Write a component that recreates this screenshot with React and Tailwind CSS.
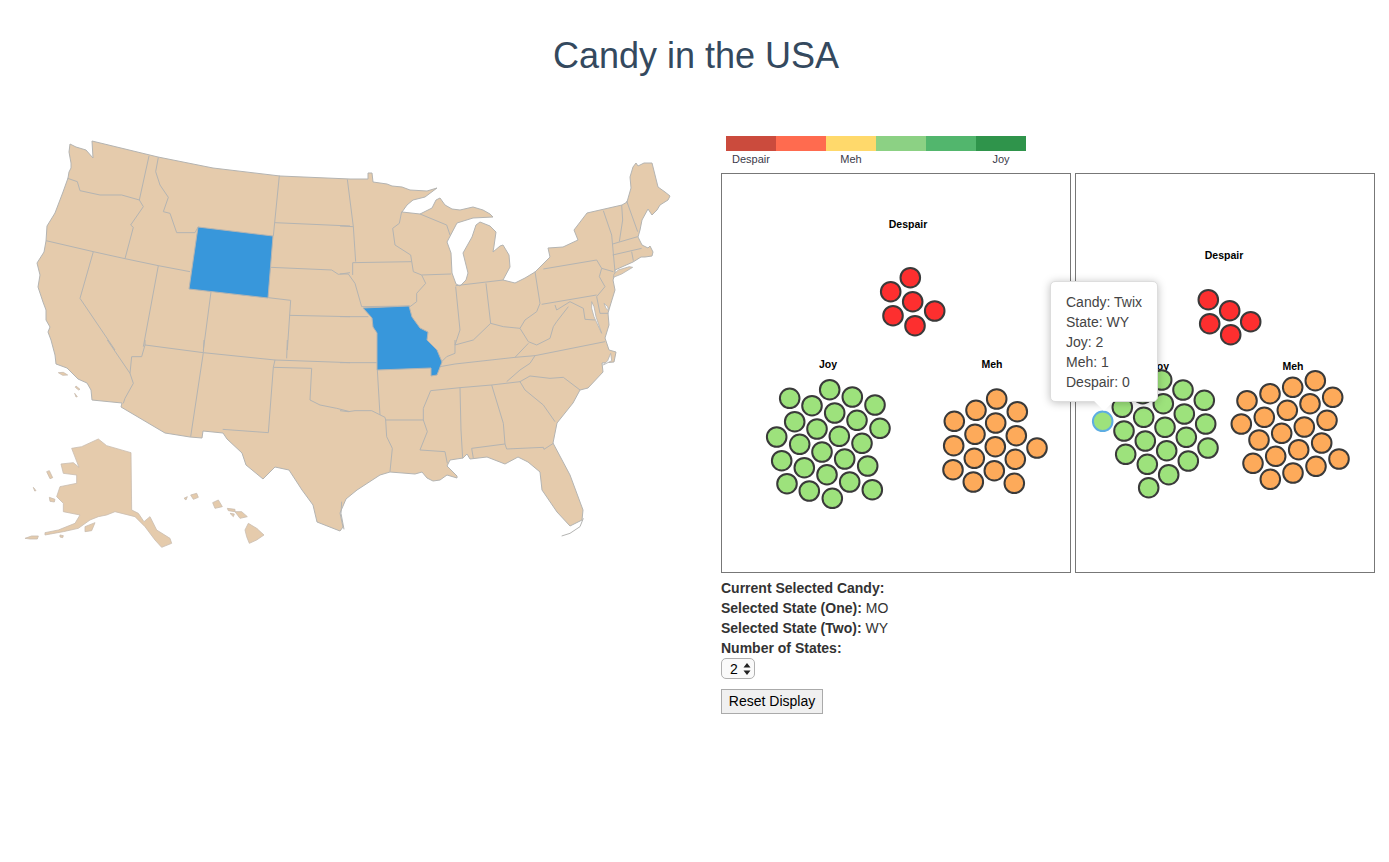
import React from "react";

const LAND = "#e5cbac";
const LINE = "#b4b4b2";

const LEGEND = ["#cb4b3d", "#ff6b4f", "#ffd96b", "#8cd184", "#52b66d", "#2f944b"];
const LEGEND_LABELS = ["Despair", "", "Meh", "", "", "Joy"];

// lower 48, clockwise from the north west corner of Washington
const MAINLAND =
  "M70 144 76 147 86 150 93 158 92 141 158 157 213 168 280 176 350 179 368 179 368 173 372 173 373 182 387 184 392 186 402 187 410 190 427 191 437 188 425 197 413 200 407 205 402 212 420 214 432 208 436 200 440 198 445 205 452 209 460 210 473 207 483 210 490 214 493 217 473 218 457 223 447 242 451 253 452 273 456 284 460 286 466 280 468 273 463 253 472 237 476 225 480 222 490 226 496 232 494 246 493 252 500 246 503 245 509 255 510 267 503 280 515 283 525 278 535 272 550 257 548 248 563 247 578 240 574 230 587 213 622 205 627 202 631 188 630 177 633 167 636 163 638 166 644 163 652 163 655 175 658 187 665 192 670 196 668 200 660 205 657 210 652 215 648 209 642 220 640 230 638 237 642 245 648 248 650 246 653 252 652 256 645 257 641 257 633 262 615 270 615 274 613 280 615 290 611 303 608 313 609 325 605 338 609 350 616 352 614 362 602 363 603 372 588 388 580 390 573 403 557 423 553 443 570 475 583 510 582 520 570 526 557 512 542 490 540 472 528 462 518 457 505 464 487 457 470 459 467 454 463 458 450 460 447 466 457 476 457 478 447 475 440 480 433 481 427 478 422 472 415 474 390 472 380 475 357 490 346 499 340 513 343 527 340 531 317 522 313 505 302 490 289 470 275 467 263 479 246 465 242 453 227 439 223 433 203 431 202 438 190 437 165 433 121 407 122 403 92 400 91 390 87 383 78 379 67 368 56 364 55 355 51 340 48 332 50 327 46 320 46 310 43 302 38 287 40 275 37 263 44 252 46 241 47 226 55 213 63 192 68 178 69 172 71 168 71 163 69 152Z";

const ZOOM1_LINES = [
  "203,175 232,185 240,212 300,225 365,225 418,240",
  "447,108 418,240 430,260 392,315 400,322 375,416",
  "138,362 280,395 375,416 475,437 570,455",
  "475,112 467,155 480,195 505,232 490,275 510,280 530,338 585,338 595,320",
  "280,395 240,535 345,690",
  "475,437 430,680",
  "633,516 610,690",
  "805,533 872,541 862,690",
  "838,167 820,348",
  "825,308 1050,318",
  "812,442 995,450 1015,463 1050,458",
  "868,586 1050,590",
];

const ZOOM2_LINES = [
  "22,178 40,320 47,425",
  "38,428 215,425",
  "0,318 40,320",
  "38,428 38,465",
  "0,462 25,462 45,490 65,560 210,558",
  "185,275 178,310 158,325 165,375 212,405 220,455 245,465 333,462",
  "245,465 257,490 230,520 230,545 210,560",
  "240,282 320,315 330,345",
  "347,500 360,630 345,675",
  "347,497 490,480",
  "438,490 452,610",
  "585,455 600,550 590,575 555,600 540,625 490,620 452,610 400,660 345,675",
  "610,447 770,420 785,445 820,455",
  "790,272 815,345 825,455",
  "785,445 778,470 795,500 770,530",
  "605,553 770,525",
  "845,255 848,300 838,365",
  "860,243 893,335",
  "818,372 893,350",
  "818,405 905,385",
  "875,395 880,422",
  "645,555 650,570 690,545 730,565 735,598 765,600",
  "770,530 780,580 805,580",
  "685,560 650,605 640,620 630,655 590,675 565,665 540,625",
  "0,590 85,590",
];

const ZOOM3_LINES = [
  "435,0 435,15 610,38 825,60 1050,68",
  "612,0 610,38 572,290",
  "825,60 820,82 805,278 668,268",
  "820,82 935,85 930,180 960,195 1010,205 1050,215",
  "322,0 390,100 400,130 375,175 370,190",
  "390,100 395,50 425,50 435,15",
  "862,0 860,55",
];

const ZOOM4_LINES = [
  "0,68 110,68",
  "112,90 120,225",
  "0,212 25,215 45,212 95,212 135,232 137,240 250,240",
  "137,240 140,290 157,325 150,395",
  "250,240 262,275 240,330 315,335 322,370",
  "272,152 250,205 250,240",
  "272,152 360,143 455,135 540,125",
  "300,80 345,72 525,52 585,47 795,5",
  "525,52 565,10",
  "305,65 320,50 345,40 345,0",
  "585,47 570,70 540,90 500,125",
  "540,125 570,108 630,115 670,112 720,150",
  "540,125 555,150 610,195 645,245",
  "360,143 363,270 368,355",
  "455,135 490,250 495,312",
  "400,355 395,325 495,312 500,327 610,322 612,328 640,310",
];

// outlying land, in zoom 3 coordinates
const OUTLYING = [
  "295,297 320,317 393,338 395,510 415,520 432,545 450,530 470,570 510,595 515,610 485,622 465,600 435,560 405,530 345,515 320,525 295,530 270,540 235,565 190,575 135,585 135,578 175,570 225,550 240,525 190,515 190,490 170,470 180,440 230,430 230,405 190,400 183,372 220,368 237,382 215,325 245,320",
  "735,570 745,550 770,565 792,585 770,600 748,610 740,590",
  "705,515 725,515 742,530 720,535",
  "682,505 705,508 705,515 685,512",
  "690,520 703,522 700,530",
  "638,488 655,480 667,500 645,505",
  "572,465 590,460 595,472 580,478",
  "552,475 562,470 558,480",
  "175,98 190,97 203,105 188,106",
  "228,138 240,148 236,150 226,142",
  "224,160 232,170 228,171",
  "140,395 148,392 158,413 150,416",
  "100,442 108,452 104,453",
  "148,472 165,478 163,486 150,484",
  "75,595 95,588 115,588 112,597 90,597",
  "255,560 285,548 275,572 255,575",
  "180,585 190,587 188,593 180,591",
];

// bays cut out of the mainland, in zoom 2 coordinates
const WATER = [
  "755,545 762,560 768,590 785,640 778,625 762,590 755,565",
  "792,550 803,560 806,573 798,565",
];

const LONG_ISLAND = "820,472 845,462 878,442 868,440 835,450 822,462";
const FLORIDA_KEYS = "665,588 690,580 720,560 730,535";
const OUTER_BANKS = "790,75 815,62 812,40 803,62";
const TEXAS_BAR = "5,485 3,520 12,568";

const WYOMING = "198 227 273 236 268 298 189 289";
const MISSOURI = "363 308 409 306 412 317 420 328 428 332 427 340 437 350 442 362 437 375 431 376 431 368 377 370 377 333 373 327 372 318";

const PANEL_ONE = {
  red: [[910.3, 277.7], [890.7, 291.7], [912.7, 301.7], [934.7, 311], [893, 315.7], [915, 325.7]],
  green: [
    [829.7, 389.7], [789.7, 398.3], [852.3, 397], [812, 405.7], [875, 405], [834.7, 413], [794.7, 421.7],
    [857, 420.3], [817, 429], [880, 428.3], [839.3, 436.3], [776.7, 437], [799.7, 444.3], [862, 443.3],
    [822, 452], [781.7, 460.7], [844.7, 459], [804.3, 467.7], [867.7, 466], [827, 474.7], [787, 483.7],
    [849.7, 482], [809.3, 491], [872.3, 489.7], [832.3, 498.3],
  ],
  orange: [
    [996.7, 399], [976, 410.3], [1017.3, 411.7], [954.3, 421.3], [995.7, 423], [975, 434.3], [1016.3, 435.7],
    [953.7, 445.7], [995.3, 446.7], [1037, 448], [974.3, 458.3], [1015.3, 459.3], [953, 469.7], [994.3, 470.7],
    [973.3, 482], [1014.3, 483.3],
  ],
};

const PANEL_TWO = {
  red: [[1208.3, 299.7], [1229.7, 310.7], [1250.7, 321.7], [1209.7, 323.7], [1230.7, 334.7]],
  green: [
    [1122.3, 407.3], [1161.7, 380], [1183, 390], [1204.3, 400.3], [1142.7, 393.7], [1163.3, 403.7], [1184.3, 414],
    [1205.7, 424], [1143.7, 417.3], [1165, 427.3], [1124, 431], [1186.3, 437.3], [1145.3, 441], [1208, 448],
    [1166.7, 450.7], [1125.7, 454.3], [1188.3, 461], [1147.3, 464.3], [1168.7, 474.7], [1148.7, 487.7],
  ],
  orange: [
    [1315.3, 380.7], [1292.7, 387.3], [1270, 393.7], [1332.7, 397.3], [1247, 400.7], [1310, 403.7], [1287.3, 410.3],
    [1264.3, 417.3], [1327, 420.3], [1241.3, 424], [1304.3, 427], [1281.7, 433.3], [1259, 440], [1321.7, 443],
    [1298.7, 449.7], [1275.7, 456.3], [1316, 466.3], [1339, 459], [1253, 463.3], [1293, 473], [1270.3, 479.3],
  ],
};

const BorderGroup = ({ x, y, lines }) => (
  <g transform={`translate(${x} ${y}) scale(0.33333)`}>
    {lines.map((pts) => (
      <polyline key={pts} points={pts} fill="none" stroke={LINE} strokeWidth="1" vectorEffect="non-scaling-stroke" />
    ))}
  </g>
);

const UsaMap = () => (
  <svg width="721" height="440" viewBox="0 130 721 440" className="shrink-0">
    <path d={MAINLAND} fill={LAND} stroke={LINE} strokeWidth="1" strokeLinejoin="round" />
    <g transform="translate(0 340) scale(0.33333)">
      {OUTLYING.map((pts) => (
        <polygon key={pts} points={pts} fill={LAND} stroke="#c9bdb0" strokeWidth="0.8" vectorEffect="non-scaling-stroke" />
      ))}
    </g>
    <BorderGroup x={0} y={120} lines={ZOOM1_LINES} />
    <BorderGroup x={340} y={120} lines={ZOOM2_LINES} />
    <BorderGroup x={0} y={340} lines={ZOOM3_LINES} />
    <BorderGroup x={340} y={340} lines={ZOOM4_LINES} />
    <g transform="translate(340 120) scale(0.33333)">
      {WATER.map((pts) => (
        <polygon key={pts} points={pts} fill="#fff" stroke={LINE} strokeWidth="0.8" vectorEffect="non-scaling-stroke" />
      ))}
      <polygon points={LONG_ISLAND} fill={LAND} stroke={LINE} strokeWidth="0.8" vectorEffect="non-scaling-stroke" />
    </g>
    <g transform="translate(340 340) scale(0.33333)">
      <polygon points={OUTER_BANKS} fill="#fff" stroke={LINE} strokeWidth="0.8" vectorEffect="non-scaling-stroke" />
      <polyline points={FLORIDA_KEYS} fill="none" stroke={LINE} strokeWidth="1" vectorEffect="non-scaling-stroke" />
      <polyline points={TEXAS_BAR} fill="none" stroke={LINE} strokeWidth="1" vectorEffect="non-scaling-stroke" />
    </g>
    <polygon points={WYOMING} fill="#3897db" stroke={LINE} strokeWidth="1" />
    <polygon points={MISSOURI} fill="#3897db" stroke={LINE} strokeWidth="1" />
  </svg>
);

const Dots = ({ items, fill }) =>
  items.map(([cx, cy]) => (
    <circle key={`${cx}-${cy}`} cx={cx} cy={cy} r="9.8" fill={fill} stroke="#3a3a3a" strokeWidth="2" />
  ));

const Label = ({ x, y, children }) => (
  <text x={x} y={y} textAnchor="middle" fontSize="10.5" fontWeight="700" fill="#000">
    {children}
  </text>
);

const App = () => {
  return (
    <div className="min-h-[862px] bg-white font-['Liberation_Sans',Arial,sans-serif] text-[14px] leading-[20px] text-[#333]">
      <h1 className="pt-[36px] pl-[3px] text-center text-[36px] leading-[40px] font-normal text-[#34495e]">
        Candy in the USA
      </h1>

      <div className="mt-[54px] flex">
        <UsaMap />

        <div className="pt-[6px]">
          {/* legend */}
          <div className="ml-[5px] flex">
            {LEGEND.map((color) => (
              <div key={color} className="h-[15px] w-[50px]" style={{ backgroundColor: color }} />
            ))}
          </div>
          <div className="ml-[5px] flex h-[22px]">
            {LEGEND_LABELS.map((label, i) => (
              <div key={i} className="w-[50px] pt-[1px] text-center text-[11px] leading-[14px] text-[#3a3a4a]">
                {label}
              </div>
            ))}
          </div>

          {/* charts */}
          <div className="relative flex gap-[4px]">
            <div className="h-[400px] w-[350px] border border-[#777]">
              <svg width="348" height="398" viewBox="722 174 348 398">
                <Label x={908} y={228}>Despair</Label>
                <Label x={828} y={368}>Joy</Label>
                <Label x={992} y={368}>Meh</Label>
                <Dots items={PANEL_ONE.red} fill="#fd2f2f" />
                <Dots items={PANEL_ONE.green} fill="#9de27c" />
                <Dots items={PANEL_ONE.orange} fill="#fdaa5a" />
              </svg>
            </div>
            <div className="h-[400px] w-[300px] border border-[#777]">
              <svg width="298" height="398" viewBox="1076 174 298 398" className="overflow-visible">
                <Label x={1224} y={259}>Despair</Label>
                <Label x={1160} y={370}>Joy</Label>
                <Label x={1293} y={370}>Meh</Label>
                <Dots items={PANEL_TWO.red} fill="#fd2f2f" />
                <Dots items={PANEL_TWO.green} fill="#9de27c" />
                <Dots items={PANEL_TWO.orange} fill="#fdaa5a" />
                <circle cx="1102.7" cy="421.3" r="9.8" fill="#9de27c" stroke="#5dade2" strokeWidth="2" />
              </svg>
            </div>

            {/* tooltip */}
            <div className="absolute top-[108px] left-[329px] h-[121px] w-[108px] rounded-[5px] border border-[#ddd] bg-white pt-[10px] pl-[15px] text-[#444] shadow-[0_1px_8px_rgba(0,0,0,0.25)]">
              <div className="absolute -bottom-[7px] left-[46px] h-[14px] w-[14px] rotate-45 bg-white" />
              <div className="relative">
                <div>Candy: Twix</div>
                <div>State: WY</div>
                <div>Joy: 2</div>
                <div>Meh: 1</div>
                <div>Despair: 0</div>
              </div>
            </div>
          </div>

          {/* selection info */}
          <div className="mt-[5px]">
            <div><span className="font-bold">Current Selected Candy:</span></div>
            <div><span className="font-bold">Selected State (One):</span> MO</div>
            <div><span className="font-bold">Selected State (Two):</span> WY</div>
            <div><span className="font-bold">Number of States:</span></div>
          </div>
          <div className="relative h-[21px] w-[34px]">
            <select
              defaultValue="2"
              className="h-[21px] w-[34px] appearance-none rounded-[5px] border border-[#b0b0b0] bg-[#fafafa] pl-[8px] text-[14px] text-black"
            >
              <option value="1">1</option>
              <option value="2">2</option>
            </select>
            <svg width="8" height="12" viewBox="0 0 8 12" className="pointer-events-none absolute top-[5px] left-[22px]">
              <path d="M4 0 7.5 4.5H.5ZM4 12 .5 7.5H7.5Z" fill="#222" />
            </svg>
          </div>
          <button className="mt-[10px] h-[25px] w-[102px] border border-[#aaa] bg-[#f0f0f0] pb-[1px] text-[14px] text-black">
            Reset Display
          </button>
        </div>
      </div>
    </div>
  );
};

export default App;
